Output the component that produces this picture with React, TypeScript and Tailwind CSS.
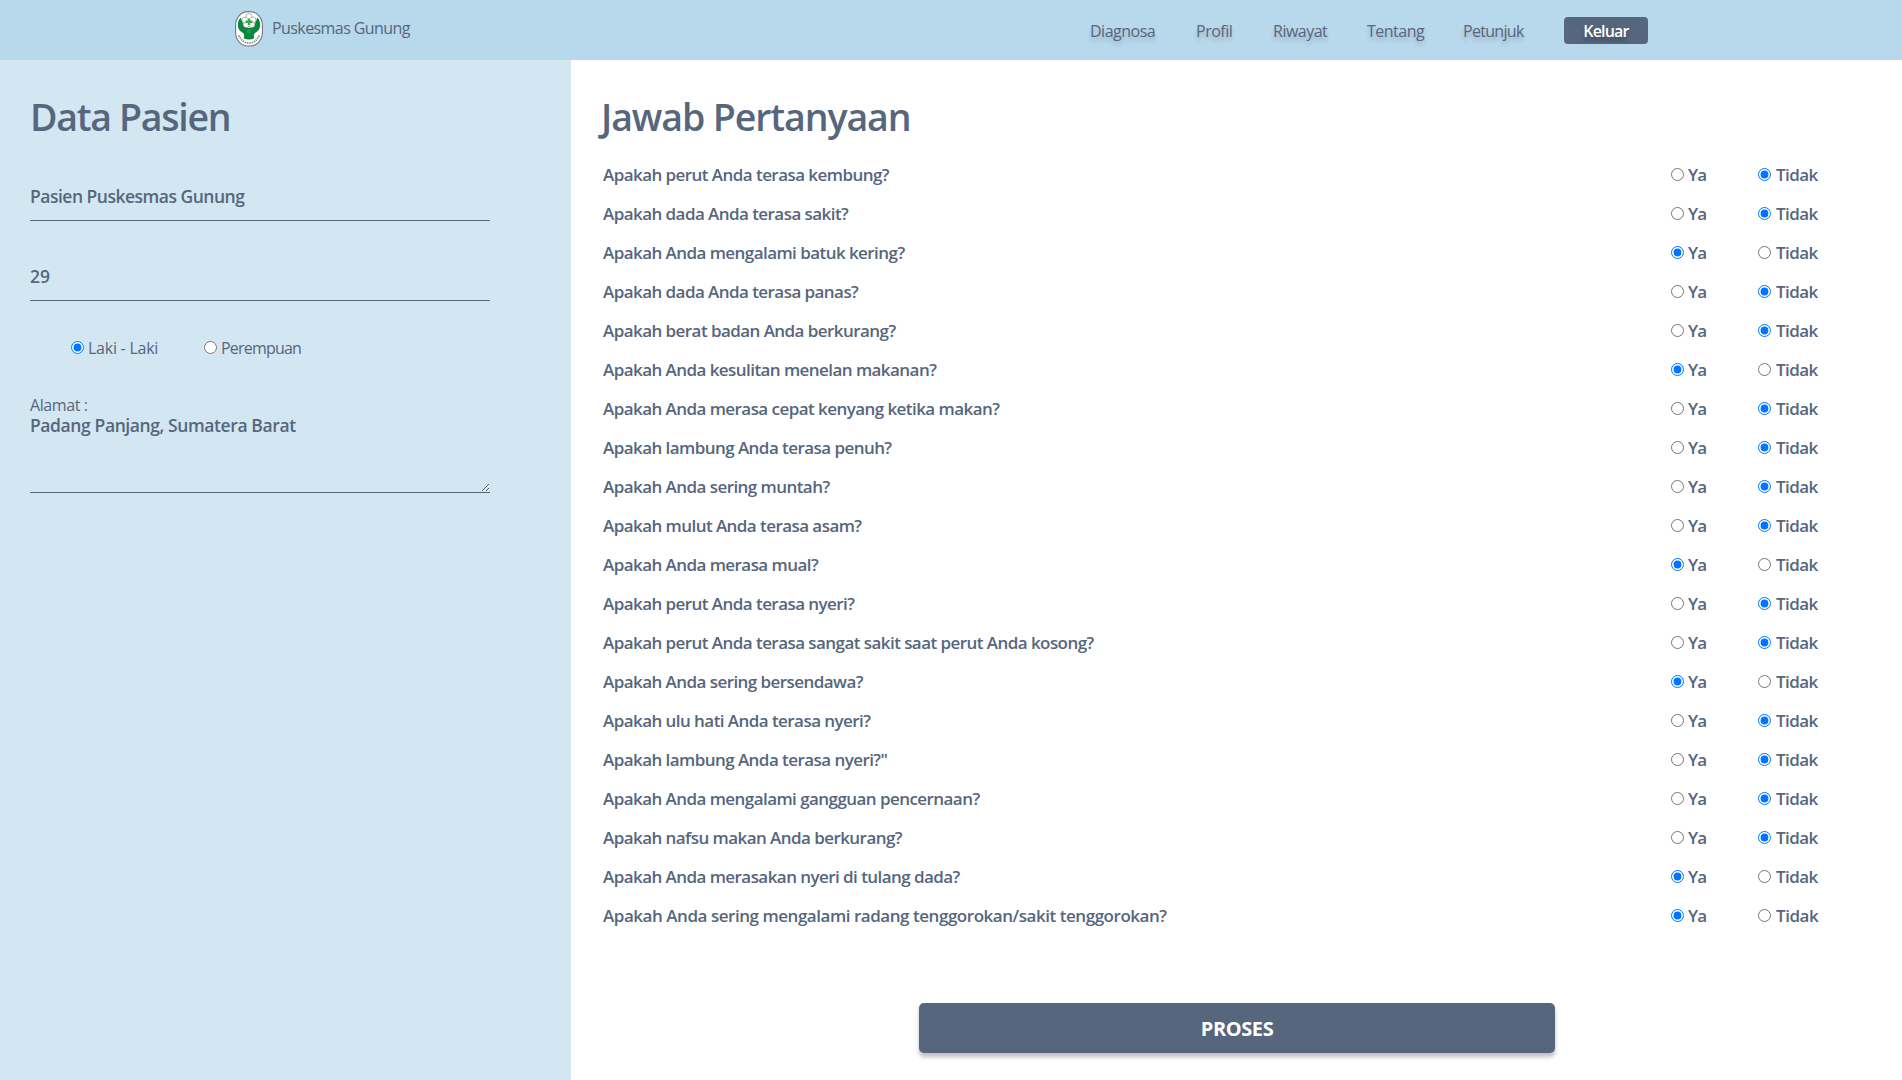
import React from 'react';

const questions: [string, boolean][] = [
  ['Apakah perut Anda terasa kembung?', false],
  ['Apakah dada Anda terasa sakit?', false],
  ['Apakah Anda mengalami batuk kering?', true],
  ['Apakah dada Anda terasa panas?', false],
  ['Apakah berat badan Anda berkurang?', false],
  ['Apakah Anda kesulitan menelan makanan?', true],
  ['Apakah Anda merasa cepat kenyang ketika makan?', false],
  ['Apakah lambung Anda terasa penuh?', false],
  ['Apakah Anda sering muntah?', false],
  ['Apakah mulut Anda terasa asam?', false],
  ['Apakah Anda merasa mual?', true],
  ['Apakah perut Anda terasa nyeri?', false],
  ['Apakah perut Anda terasa sangat sakit saat perut Anda kosong?', false],
  ['Apakah Anda sering bersendawa?', true],
  ['Apakah ulu hati Anda terasa nyeri?', false],
  ['Apakah lambung Anda terasa nyeri?"', false],
  ['Apakah Anda mengalami gangguan pencernaan?', false],
  ['Apakah nafsu makan Anda berkurang?', false],
  ['Apakah Anda merasakan nyeri di tulang dada?', true],
  ['Apakah Anda sering mengalami radang tenggorokan/sakit tenggorokan?', true],
];

const navItems = [
  { label: 'Diagnosa', width: 'w-[106px]' },
  { label: 'Profil', width: 'w-[77px]' },
  { label: 'Riwayat', width: 'w-[94px]' },
  { label: 'Tentang', width: 'w-[96px]' },
  { label: 'Petunjuk', width: 'w-[101px] tracking-[-0.7px]' },
];

function Logo() {
  return (
    <svg className="h-[36px] w-[28px] shrink-0" viewBox="0 0 28 36">
      <rect x="0.6" y="0.6" width="26.8" height="34.4" rx="12.4" ry="13.5" fill="#fff" stroke="#77797c" strokeWidth="1.1" />
      <path
        d="M5.6 6.4C2.6 9 2 15.600 4.200 18.800C5.800 21 8.400 21.800 9 23.200C9.400 24.600 9 26 8.600 27.200Q14 30 19.400 27.200C19 26 18.600 24.600 19 23.200C19.600 21.800 22.200 21 23.800 18.800C26 15.600 25.400 9 22.400 6.400C21.400 8.400 20.600 11.400 19.200 14.600Q16.600 17 14 17Q11.400 17 8.800 14.600C7.400 11.400 6.600 8.400 5.600 6.400Z"
        fill="#08883f"
      />
      <circle cx="14" cy="20.4" r="3" fill="#12a04c" stroke="#067536" strokeWidth="0.6" />
      <g fill="#fff" stroke="#7d8883" strokeWidth="0.6">
        <circle cx="14" cy="5.6" r="3" />
        <circle cx="18" cy="9" r="3" />
        <circle cx="16.8" cy="13.6" r="3" />
        <circle cx="11.2" cy="13.6" r="3" />
        <circle cx="10" cy="9" r="3" />
      </g>
      <circle cx="14" cy="10.6" r="3.6" fill="#fff" />
      <path d="M12.8 7.4h2.4v2.2h2.2v2.3h-2.2v2.2h-2.4v-2.2h-2.2V9.6h2.2Z" fill="#35ad3f" />
      <path d="M3.6 24.4Q7.5 32 14 32Q20.5 32 24.4 24.4" fill="none" stroke="#85888a" strokeWidth="1.8" strokeDasharray="1.3 1" />
    </svg>
  );
}

export default function App() {
  return (
    <div className="flex h-[1080px] w-full flex-col overflow-hidden bg-white font-['Open_Sans',sans-serif] text-[#56667d]">
      <header className="flex h-[60px] shrink-0 bg-[#b8d8eb] pl-[235px]">
        <div className="flex w-[855px] items-start pt-[10.5px]">
          <Logo />
          <span className="ml-[9px] mt-[5px] text-[16px] leading-[24px] tracking-[-0.58px]">Puskesmas Gunung</span>
        </div>
        <nav className="flex pt-[17px] text-[16px] leading-[29px] tracking-[-0.5px] [text-shadow:0_4px_4px_rgba(0,0,0,0.18)]">
          {navItems.map((item) => (
            <a key={item.label} className={item.width}>
              {item.label}
            </a>
          ))}
          <button className="h-[27px] w-[84px] rounded-[4px] bg-[#56667d] font-semibold leading-[29px] tracking-[-0.8px] text-white [text-shadow:0_4px_4px_rgba(0,0,0,0.25)]">
            Keluar
          </button>
        </nav>
      </header>
      <div className="flex min-h-0 grow">
        <aside className="w-[571px] shrink-0 bg-[#d3e7f2] pl-[30px] pt-[30px]">
          <h1 className="h-[54px] text-[37.5px] font-semibold leading-[53px] tracking-[-1.3px]">Data Pasien</h1>
          <input
            readOnly
            defaultValue="Pasien Puskesmas Gunung"
            className="mt-[31px] block h-[46px] w-[460px] border-b border-[#56667d] pb-[3px] text-[17.5px] font-semibold tracking-[-0.5px] outline-none"
          />
          <input
            readOnly
            defaultValue="29"
            className="mt-[34px] block h-[46px] w-[460px] border-b border-[#56667d] pb-[3px] text-[17.5px] font-semibold tracking-[-0.1px] outline-none"
          />
          <div className="mt-[34px] flex h-[27px] pl-[41px] text-[16px] leading-[26px]">
            <label className="flex w-[133px] tracking-[-0.25px]">
              <input type="radio" name="gender" defaultChecked className="mr-[4px] mt-[6px] size-[13px]" />
              Laki - Laki
            </label>
            <label className="flex tracking-[-0.8px]">
              <input type="radio" name="gender" className="mr-[4px] mt-[6px] size-[13px]" />
              Perempuan
            </label>
          </div>
          <label className="mt-[32px] block h-[20px] text-[16px] leading-[22px] tracking-[-0.4px]">Alamat :</label>
          <textarea
            readOnly
            defaultValue="Padang Panjang, Sumatera Barat"
            className="block h-[79px] w-[460px] border-b border-[#56667d] text-[17.5px] font-semibold leading-[22px] tracking-[-0.4px] outline-none"
          />
        </aside>
        <main className="flex grow flex-col pl-[31px] pt-[30px]">
          <h1 className="-ml-px h-[54px] text-[37.5px] font-semibold leading-[53px] tracking-[-1.1px]">Jawab Pertanyaan</h1>
          <div className="mt-[11px] text-[17px] font-semibold tracking-[-0.56px]">
            {questions.map(([text, yes], i) => (
              <div key={i} className="flex h-[39px] items-center pl-px last:tracking-[-0.46px]">
                <span className="w-[1068px]">{text}</span>
                <label className="flex w-[87px] items-center tracking-[-0.9px]">
                  <input type="radio" name={`q${i}`} defaultChecked={yes} className="mr-[4px] size-[13px]" />
                  Ya
                </label>
                <label className="flex items-center">
                  <input type="radio" name={`q${i}`} defaultChecked={!yes} className="mr-[5px] size-[13px]" />
                  Tidak
                </label>
              </div>
            ))}
          </div>
          <button className="ml-[317px] mt-[68px] h-[50px] w-[636px] rounded-[5px] bg-[#56667d] pt-[2px] text-[20px] font-bold tracking-[-0.4px] text-white shadow-[0_4px_4px_rgba(0,0,0,0.25)]">
            PROSES
          </button>
        </main>
      </div>
    </div>
  );
}
